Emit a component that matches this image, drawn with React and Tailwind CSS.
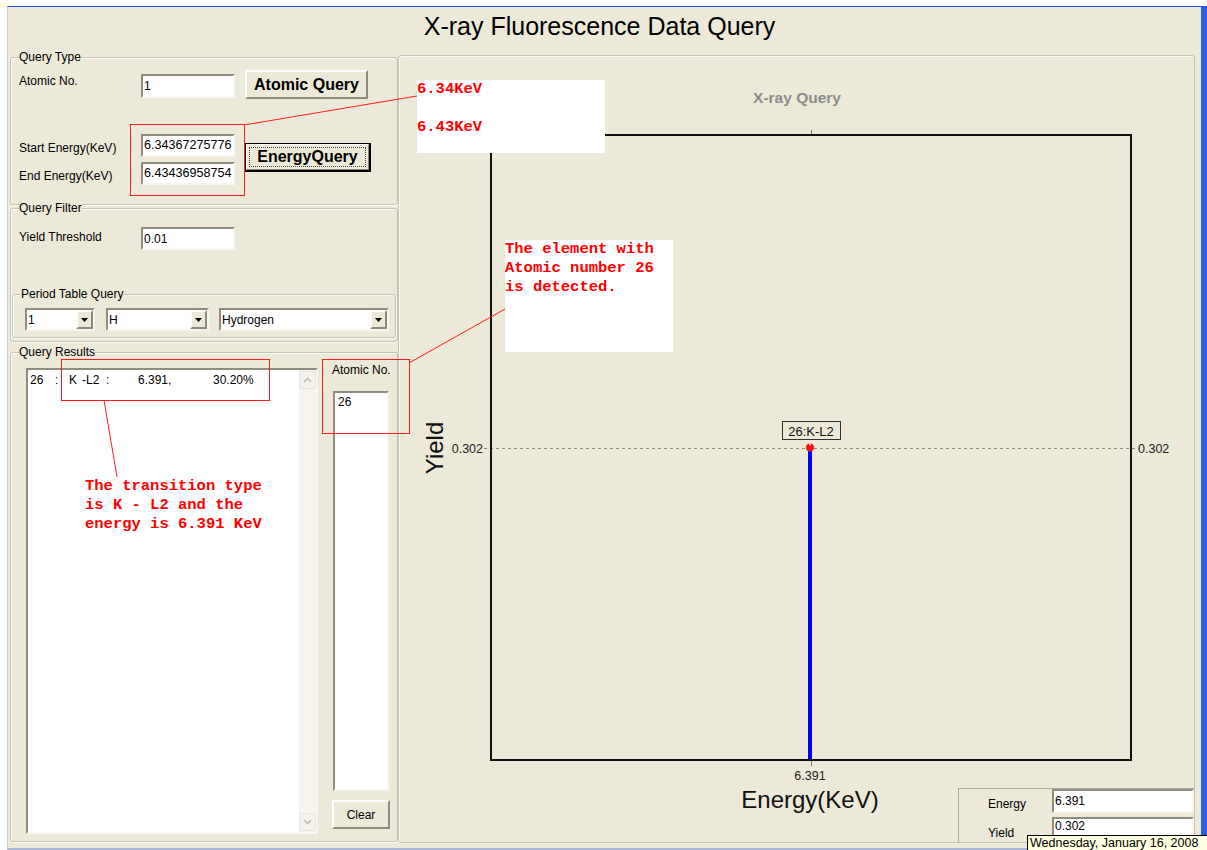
import React from "react";

const UI = "font-['Liberation_Sans',Arial,sans-serif]";
const MONO = "font-['Liberation_Mono','DejaVu_Sans_Mono',monospace]";

const SUNKEN =
  "border-2 border-t-[#8f8c80] border-l-[#8f8c80] border-b-[#f6f5ef] border-r-[#f6f5ef] bg-white";
const RAISED =
  "border-2 border-t-[#fdfdfb] border-l-[#fdfdfb] border-b-[#8e8b7e] border-r-[#8e8b7e] bg-[#ece9d8]";

function GroupBox({ label, className = "", children }) {
  return (
    <div
      className={`relative border border-[#c6c3b3] rounded-[3px] shadow-[inset_1px_1px_0_#fbfaf6,1px_1px_0_#fbfaf6] ${className}`}
    >
      {label && (
        <span className="absolute -top-[8px] left-[8px] bg-[#ece9d8] leading-[14px] whitespace-nowrap">
          {label}
        </span>
      )}
      {children}
    </div>
  );
}

function TextBox({ className = "", value, size = "text-[12px]" }) {
  return (
    <div
      className={`flex items-center overflow-hidden whitespace-nowrap pl-[1px] ${size} ${SUNKEN} ${className}`}
    >
      {value}
    </div>
  );
}

function Button({ className = "", children }) {
  return (
    <div className={`flex items-center justify-center ${RAISED} ${className}`}>
      {children}
    </div>
  );
}

function Combo({ className = "", value }) {
  return (
    <div className={`flex h-[23px] ${SUNKEN} ${className}`}>
      <div className="flex-1 flex items-center pl-[1px] overflow-hidden whitespace-nowrap">
        {value}
      </div>
      <div
        className={`w-[17px] h-full flex items-center justify-center ${RAISED}`}
      >
        <svg width="7" height="4" viewBox="0 0 7 4">
          <path d="M0 0h7L3.5 4z" fill="#000" />
        </svg>
      </div>
    </div>
  );
}

function ScrollArrow({ up }) {
  return (
    <div className="w-[17px] h-[18px] rounded-[2px] border border-[#e6e5de] bg-[#f3f2ec] flex items-center justify-center">
      <svg width="9" height="6" viewBox="0 0 9 6">
        <polyline
          points={up ? "1,5 4.5,1.5 8,5" : "1,1 4.5,4.5 8,1"}
          fill="none"
          stroke="#bdbcb4"
          strokeWidth="1.6"
        />
      </svg>
    </div>
  );
}

function LeftColumn() {
  return (
    <div className="w-[390px] pl-[2px]">
      <GroupBox label="Query Type" className="mt-[2px] w-[388px] h-[148px]">
        <div className="pl-[8px] pt-[12px]">
          <div className="flex">
            <div className="w-[122px] pt-[4px] leading-[14px]">Atomic No.</div>
            <TextBox className="w-[94px] h-[24px] mt-[4px]" value="1" />
            <Button className="ml-[10px] w-[123px] h-[29px] text-[16px] font-bold">
              Atomic Query
            </Button>
          </div>
          <div className="flex mt-[35px]">
            <div>
              <div className="flex">
                <div className="w-[122px] pt-[7px] leading-[14px]">Start Energy(KeV)</div>
                <TextBox
                  className="w-[94px] h-[23px]"
                  size="text-[12.6px]"
                  value="6.34367275776"
                />
              </div>
              <div className="flex mt-[5px]">
                <div className="w-[122px] pt-[7px] leading-[14px]">End Energy(KeV)</div>
                <TextBox
                  className="w-[94px] h-[23px]"
                  size="text-[12.6px]"
                  value="6.43436958754"
                />
              </div>
            </div>
            <div className="ml-[10px] mt-[9px] w-[126px] h-[29px] border border-black border-b-2 border-r-2">
              <div className="h-full border border-t-white border-l-white border-b-[#8e8b7e] border-r-[#8e8b7e] bg-[#ece9d8] p-[2px]">
                <div className="h-full border border-dotted border-[#444] flex items-center justify-center text-[16px] font-bold">
                  EnergyQuery
                </div>
              </div>
            </div>
          </div>
        </div>
      </GroupBox>

      <GroupBox label="Query Filter" className="mt-[3px] w-[388px] h-[134px]">
        <div className="pl-[8px] pt-[18px] flex">
          <div className="w-[122px] pt-[3px] leading-[14px]">Yield Threshold</div>
          <TextBox className="w-[94px] h-[23px]" value="0.01" />
        </div>
        <GroupBox label="Period Table Query" className="ml-[1px] mt-[44px] w-[384px] h-[44px]">
          <div className="flex pl-[12px] pt-[13px]">
            <Combo className="w-[70px]" value="1" />
            <Combo className="ml-[11px] w-[103px]" value="H" />
            <Combo className="ml-[10px] w-[170px]" value="Hydrogen" />
          </div>
        </GroupBox>
      </GroupBox>

      <GroupBox label="Query Results" className="mt-[10px] w-[388px] h-[490px]">
        <div className="flex pl-[15px] pt-[10px]">
          <div className={`mt-[5px] w-[292px] h-[466px] flex ${SUNKEN}`}>
            <div className="flex-1 pl-[2px] pt-[3px]">
              <div className="flex leading-[14px] whitespace-nowrap">
                <span className="w-[25px]">26</span>
                <span className="w-[14px]">:</span>
                <span className="w-[13px]">K</span>
                <span className="w-[24px]">-L2</span>
                <span className="w-[32px]">:</span>
                <span className="w-[75px]">6.391,</span>
                <span>30.20%</span>
              </div>
            </div>
            <div className="w-[17px] h-full bg-[#f5f4ef] flex flex-col justify-between py-[1px]">
              <ScrollArrow up />
              <ScrollArrow />
            </div>
          </div>
          <div className="ml-[14px] flex flex-col">
            <div className="leading-[14px] h-[14px] whitespace-nowrap">Atomic No.</div>
            <div className={`ml-[1px] mt-[14px] w-[56px] h-[400px] pl-[3px] pt-[2px] leading-[14px] ${SUNKEN}`}>
              26
            </div>
            <Button className="mt-[9px] w-[58px] h-[29px]">Clear</Button>
          </div>
        </div>
      </GroupBox>
    </div>
  );
}

function Chart() {
  const f = "Liberation Sans, Arial, sans-serif";
  return (
    <svg
      className="absolute left-[-1px] top-[-1px]"
      width="797"
      height="788"
      viewBox="398 55 797 788"
      fontFamily={f}
    >
      <text x="797" y="103" textAnchor="middle" fontWeight="bold" fontSize="15.5" fill="#8c8c8c">
        X-ray Query
      </text>
      <line x1="811.5" y1="130" x2="811.5" y2="135" stroke="#777" />
      <line x1="484" y1="448.5" x2="1139" y2="448.5" stroke="#8a8a8a" strokeDasharray="3 3" />
      <rect x="491" y="135" width="640" height="625" fill="none" stroke="#111" strokeWidth="2" />
      <text x="483" y="453" textAnchor="end" fontSize="12.5" fill="#222">0.302</text>
      <text x="1138" y="453" fontSize="12.5" fill="#222">0.302</text>
      <line x1="810" y1="449" x2="810" y2="759" stroke="#0000ff" strokeWidth="4" />
      <circle cx="810" cy="447.5" r="4" fill="#ff1010" />
      <circle cx="810" cy="444.5" r="1" fill="#fff" />
      <rect x="782.5" y="421.5" width="58" height="18" fill="none" stroke="#333" />
      <text x="811" y="435.5" textAnchor="middle" fontSize="13" fill="#111">26:K-L2</text>
      <line x1="811.5" y1="761" x2="811.5" y2="766" stroke="#777" />
      <text x="810" y="780" textAnchor="middle" fontSize="12.5" fill="#222">6.391</text>
      <text x="810" y="808" textAnchor="middle" fontSize="24" fill="#111">Energy(KeV)</text>
      <text transform="translate(443,448) rotate(-90)" textAnchor="middle" fontSize="24" fill="#111">
        Yield
      </text>
    </svg>
  );
}

function ChartPanel() {
  return (
    <div className="relative w-[797px] h-[788px] border border-[#c6c3b3] rounded-[3px] shadow-[inset_1px_1px_0_#fbfaf6] flex flex-col justify-end items-end">
      <Chart />
      <div className="relative w-[236px] h-[54px] border-t border-l border-[#aeab9c] overflow-hidden">
        <div className="flex">
          <div className="w-[93px] pl-[29px] pt-[8px] leading-[14px]">Energy</div>
          <TextBox className="w-[142px] h-[24px]" value="6.391" />
        </div>
        <div className="flex mt-[4px]">
          <div className="w-[93px] pl-[29px] pt-[9px] leading-[14px]">Yield</div>
          <TextBox className="w-[142px] h-[27px] !items-start leading-[14px]" value="0.302" />
        </div>
      </div>
    </div>
  );
}

export default function App() {
  return (
    <div
      className={`relative w-[1207px] h-[850px] overflow-hidden bg-white pl-[7px] pt-[6px] text-[12px] text-black ${UI}`}
    >
      <div className="w-[1200px] h-[844px] bg-[#ece9d8] border-t border-t-[#1e50e0] border-l border-l-[#c4ccd8] border-r-[6px] border-r-[#2c5de5] border-b-2 border-b-[#a9b9d6] flex flex-col">
        <div className="h-[48px] pt-[5px] pr-[10px] text-center text-[25px] leading-[29px]">
          X-ray Fluorescence Data Query
        </div>
        <div className="flex h-[788px]">
          <LeftColumn />
          <ChartPanel />
        </div>
      </div>

      {/* callout frames and leader lines */}
      <svg className="absolute left-0 top-0 pointer-events-none" width="1207" height="850">
        <g stroke="#ff1c1c" fill="none" strokeWidth="1">
          <rect x="130.5" y="124.5" width="114" height="71" />
          <rect x="61.5" y="359.5" width="208" height="41" />
          <rect x="322.5" y="359.5" width="87" height="74" />
          <line x1="244" y1="125" x2="417" y2="96" />
          <line x1="104" y1="400" x2="117" y2="477" />
          <line x1="409" y1="363" x2="505" y2="309" />
        </g>
      </svg>

      <div
        className={`absolute left-[417px] top-[80px] w-[188px] h-[73px] bg-white ${MONO} text-[15.5px] font-bold leading-[19px] text-[#ff0000] whitespace-pre`}
      >
        {"6.34KeV\n\n6.43KeV"}
      </div>
      <div
        className={`absolute left-[505px] top-[240px] w-[168px] h-[112px] bg-white ${MONO} text-[15.5px] font-bold leading-[19px] text-[#ff0000] whitespace-pre`}
      >
        {"The element with\nAtomic number 26\nis detected."}
      </div>
      <div
        className={`absolute left-[85px] top-[477px] ${MONO} text-[15.5px] font-bold leading-[19px] text-[#ff0000] whitespace-pre`}
      >
        {"The transition type\nis K - L2 and the\nenergy is 6.391 KeV"}
      </div>

      <div className="absolute left-[1027px] top-[835px] w-[182px] h-[17px] bg-[#ffffe1] border border-black pl-[2px] text-[12.5px] leading-[14px] whitespace-nowrap">
        Wednesday, January 16, 2008
      </div>
    </div>
  );
}
